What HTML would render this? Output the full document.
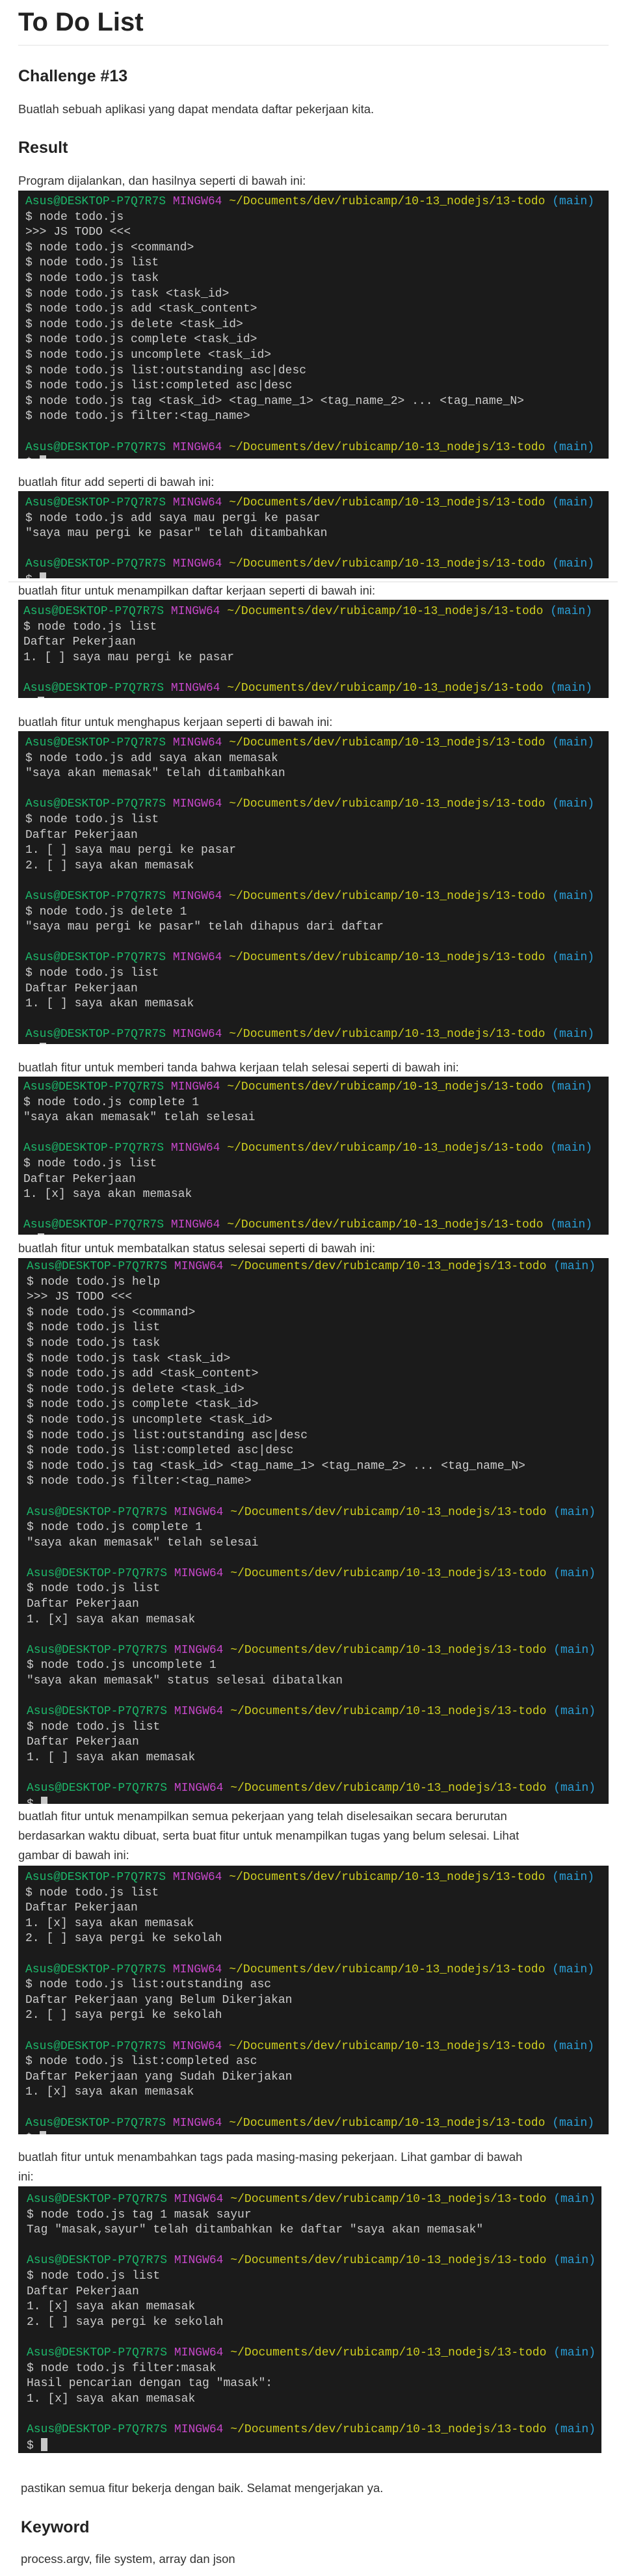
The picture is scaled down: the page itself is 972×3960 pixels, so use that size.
<!DOCTYPE html>
<html><head><meta charset="utf-8">
<style>
html,body{margin:0;padding:0;background:#fff;}
body{width:972px;height:3960px;position:relative;overflow:hidden;font-family:"Liberation Sans",sans-serif;color:#333;}
.t{position:absolute;left:28px;font-size:18.5px;line-height:30px;white-space:nowrap;}
h1,h2{margin:0;position:absolute;left:28px;color:#222;white-space:nowrap;}
h1{font-size:40px;line-height:50px;top:9px;}
h2{font-size:25px;line-height:34px;}
.hr{position:absolute;height:1px;background:#e4e4e4;}
.term{position:absolute;left:28px;width:908px;background:#1b1b1b;overflow:hidden;box-sizing:border-box;padding-left:11px;}
.term pre{margin:0;font-family:"Liberation Mono",monospace;font-size:18px;line-height:23.6px;color:#cccccc;white-space:pre;}
.g{color:#1cb86a}.m{color:#c647c9}.y{color:#cfcf1f}.c{color:#2a9ed6}
.cur{display:inline-block;width:10px;height:20px;background:#c8c8c8;vertical-align:-4px;}
</style></head><body>

<h1>To Do List</h1>
<div class="hr" style="left:28px;width:908px;top:69px"></div>
<h2 style="top:100px">Challenge #13</h2>
<div class="t" style="top:153px">Buatlah sebuah aplikasi yang dapat mendata daftar pekerjaan kita.</div>
<h2 style="top:210px">Result</h2>
<div class="t" style="top:263px">Program dijalankan, dan hasilnya seperti di bawah ini:</div>

<div class="term" style="top:293px;height:412px;padding-top:6px"><pre><span class="g">Asus@DESKTOP-P7Q7R7S</span> <span class="m">MINGW64</span> <span class="y">~/Documents/dev/rubicamp/10-13_nodejs/13-todo</span> <span class="c">(main)</span>
$ node todo.js
&gt;&gt;&gt; JS TODO &lt;&lt;&lt;
$ node todo.js &lt;command&gt;
$ node todo.js list
$ node todo.js task
$ node todo.js task &lt;task_id&gt;
$ node todo.js add &lt;task_content&gt;
$ node todo.js delete &lt;task_id&gt;
$ node todo.js complete &lt;task_id&gt;
$ node todo.js uncomplete &lt;task_id&gt;
$ node todo.js list:outstanding asc|desc
$ node todo.js list:completed asc|desc
$ node todo.js tag &lt;task_id&gt; &lt;tag_name_1&gt; &lt;tag_name_2&gt; ... &lt;tag_name_N&gt;
$ node todo.js filter:&lt;tag_name&gt;

<span class="g">Asus@DESKTOP-P7Q7R7S</span> <span class="m">MINGW64</span> <span class="y">~/Documents/dev/rubicamp/10-13_nodejs/13-todo</span> <span class="c">(main)</span>
$ <span class="cur"></span></pre></div>

<div class="t" style="top:726px">buatlah fitur add seperti di bawah ini:</div>
<div class="term" style="top:755px;height:134px;padding-top:7px"><pre><span class="g">Asus@DESKTOP-P7Q7R7S</span> <span class="m">MINGW64</span> <span class="y">~/Documents/dev/rubicamp/10-13_nodejs/13-todo</span> <span class="c">(main)</span>
$ node todo.js add saya mau pergi ke pasar
"saya mau pergi ke pasar" telah ditambahkan

<span class="g">Asus@DESKTOP-P7Q7R7S</span> <span class="m">MINGW64</span> <span class="y">~/Documents/dev/rubicamp/10-13_nodejs/13-todo</span> <span class="c">(main)</span>
$ <span class="cur"></span></pre></div>
<div class="hr" style="left:13px;width:937px;top:894px;background:#ddd"></div>

<div class="t" style="top:893px">buatlah fitur untuk menampilkan daftar kerjaan seperti di bawah ini:</div>
<div class="term" style="top:922px;height:151px;padding-top:7px;padding-left:8px"><pre><span class="g">Asus@DESKTOP-P7Q7R7S</span> <span class="m">MINGW64</span> <span class="y">~/Documents/dev/rubicamp/10-13_nodejs/13-todo</span> <span class="c">(main)</span>
$ node todo.js list
Daftar Pekerjaan
1. [ ] saya mau pergi ke pasar

<span class="g">Asus@DESKTOP-P7Q7R7S</span> <span class="m">MINGW64</span> <span class="y">~/Documents/dev/rubicamp/10-13_nodejs/13-todo</span> <span class="c">(main)</span>
$ <span class="cur"></span></pre></div>

<div class="t" style="top:1095px">buatlah fitur untuk menghapus kerjaan seperti di bawah ini:</div>
<div class="term" style="top:1124px;height:481px;padding-top:7px"><pre><span class="g">Asus@DESKTOP-P7Q7R7S</span> <span class="m">MINGW64</span> <span class="y">~/Documents/dev/rubicamp/10-13_nodejs/13-todo</span> <span class="c">(main)</span>
$ node todo.js add saya akan memasak
"saya akan memasak" telah ditambahkan

<span class="g">Asus@DESKTOP-P7Q7R7S</span> <span class="m">MINGW64</span> <span class="y">~/Documents/dev/rubicamp/10-13_nodejs/13-todo</span> <span class="c">(main)</span>
$ node todo.js list
Daftar Pekerjaan
1. [ ] saya mau pergi ke pasar
2. [ ] saya akan memasak

<span class="g">Asus@DESKTOP-P7Q7R7S</span> <span class="m">MINGW64</span> <span class="y">~/Documents/dev/rubicamp/10-13_nodejs/13-todo</span> <span class="c">(main)</span>
$ node todo.js delete 1
"saya mau pergi ke pasar" telah dihapus dari daftar

<span class="g">Asus@DESKTOP-P7Q7R7S</span> <span class="m">MINGW64</span> <span class="y">~/Documents/dev/rubicamp/10-13_nodejs/13-todo</span> <span class="c">(main)</span>
$ node todo.js list
Daftar Pekerjaan
1. [ ] saya akan memasak

<span class="g">Asus@DESKTOP-P7Q7R7S</span> <span class="m">MINGW64</span> <span class="y">~/Documents/dev/rubicamp/10-13_nodejs/13-todo</span> <span class="c">(main)</span>
$ <span class="cur"></span></pre></div>

<div class="t" style="top:1626px">buatlah fitur untuk memberi tanda bahwa kerjaan telah selesai seperti di bawah ini:</div>
<div class="term" style="top:1655px;height:243px;padding-top:5px;padding-left:8px"><pre><span class="g">Asus@DESKTOP-P7Q7R7S</span> <span class="m">MINGW64</span> <span class="y">~/Documents/dev/rubicamp/10-13_nodejs/13-todo</span> <span class="c">(main)</span>
$ node todo.js complete 1
"saya akan memasak" telah selesai

<span class="g">Asus@DESKTOP-P7Q7R7S</span> <span class="m">MINGW64</span> <span class="y">~/Documents/dev/rubicamp/10-13_nodejs/13-todo</span> <span class="c">(main)</span>
$ node todo.js list
Daftar Pekerjaan
1. [x] saya akan memasak

<span class="g">Asus@DESKTOP-P7Q7R7S</span> <span class="m">MINGW64</span> <span class="y">~/Documents/dev/rubicamp/10-13_nodejs/13-todo</span> <span class="c">(main)</span>
$ <span class="cur"></span></pre></div>

<div class="t" style="top:1904px">buatlah fitur untuk membatalkan status selesai seperti di bawah ini:</div>
<div class="term" style="top:1934px;height:839px;padding-top:2px;padding-left:13px"><pre><span class="g">Asus@DESKTOP-P7Q7R7S</span> <span class="m">MINGW64</span> <span class="y">~/Documents/dev/rubicamp/10-13_nodejs/13-todo</span> <span class="c">(main)</span>
$ node todo.js help
&gt;&gt;&gt; JS TODO &lt;&lt;&lt;
$ node todo.js &lt;command&gt;
$ node todo.js list
$ node todo.js task
$ node todo.js task &lt;task_id&gt;
$ node todo.js add &lt;task_content&gt;
$ node todo.js delete &lt;task_id&gt;
$ node todo.js complete &lt;task_id&gt;
$ node todo.js uncomplete &lt;task_id&gt;
$ node todo.js list:outstanding asc|desc
$ node todo.js list:completed asc|desc
$ node todo.js tag &lt;task_id&gt; &lt;tag_name_1&gt; &lt;tag_name_2&gt; ... &lt;tag_name_N&gt;
$ node todo.js filter:&lt;tag_name&gt;

<span class="g">Asus@DESKTOP-P7Q7R7S</span> <span class="m">MINGW64</span> <span class="y">~/Documents/dev/rubicamp/10-13_nodejs/13-todo</span> <span class="c">(main)</span>
$ node todo.js complete 1
"saya akan memasak" telah selesai

<span class="g">Asus@DESKTOP-P7Q7R7S</span> <span class="m">MINGW64</span> <span class="y">~/Documents/dev/rubicamp/10-13_nodejs/13-todo</span> <span class="c">(main)</span>
$ node todo.js list
Daftar Pekerjaan
1. [x] saya akan memasak

<span class="g">Asus@DESKTOP-P7Q7R7S</span> <span class="m">MINGW64</span> <span class="y">~/Documents/dev/rubicamp/10-13_nodejs/13-todo</span> <span class="c">(main)</span>
$ node todo.js uncomplete 1
"saya akan memasak" status selesai dibatalkan

<span class="g">Asus@DESKTOP-P7Q7R7S</span> <span class="m">MINGW64</span> <span class="y">~/Documents/dev/rubicamp/10-13_nodejs/13-todo</span> <span class="c">(main)</span>
$ node todo.js list
Daftar Pekerjaan
1. [ ] saya akan memasak

<span class="g">Asus@DESKTOP-P7Q7R7S</span> <span class="m">MINGW64</span> <span class="y">~/Documents/dev/rubicamp/10-13_nodejs/13-todo</span> <span class="c">(main)</span>
$ <span class="cur"></span></pre></div>

<div class="t" style="top:2777px">buatlah fitur untuk menampilkan semua pekerjaan yang telah diselesaikan secara berurutan<br>berdasarkan waktu dibuat, serta buat fitur untuk menampilkan tugas yang belum selesai. Lihat<br>gambar di bawah ini:</div>
<div class="term" style="top:2868px;height:413px;padding-top:7px"><pre><span class="g">Asus@DESKTOP-P7Q7R7S</span> <span class="m">MINGW64</span> <span class="y">~/Documents/dev/rubicamp/10-13_nodejs/13-todo</span> <span class="c">(main)</span>
$ node todo.js list
Daftar Pekerjaan
1. [x] saya akan memasak
2. [ ] saya pergi ke sekolah

<span class="g">Asus@DESKTOP-P7Q7R7S</span> <span class="m">MINGW64</span> <span class="y">~/Documents/dev/rubicamp/10-13_nodejs/13-todo</span> <span class="c">(main)</span>
$ node todo.js list:outstanding asc
Daftar Pekerjaan yang Belum Dikerjakan
2. [ ] saya pergi ke sekolah

<span class="g">Asus@DESKTOP-P7Q7R7S</span> <span class="m">MINGW64</span> <span class="y">~/Documents/dev/rubicamp/10-13_nodejs/13-todo</span> <span class="c">(main)</span>
$ node todo.js list:completed asc
Daftar Pekerjaan yang Sudah Dikerjakan
1. [x] saya akan memasak

<span class="g">Asus@DESKTOP-P7Q7R7S</span> <span class="m">MINGW64</span> <span class="y">~/Documents/dev/rubicamp/10-13_nodejs/13-todo</span> <span class="c">(main)</span>
$ <span class="cur"></span></pre></div>

<div class="t" style="top:3301px">buatlah fitur untuk menambahkan tags pada masing-masing pekerjaan. Lihat gambar di bawah<br>ini:</div>
<div class="term" style="top:3361px;height:410px;padding-top:9px;padding-left:13px;width:897px"><pre><span class="g">Asus@DESKTOP-P7Q7R7S</span> <span class="m">MINGW64</span> <span class="y">~/Documents/dev/rubicamp/10-13_nodejs/13-todo</span> <span class="c">(main)</span>
$ node todo.js tag 1 masak sayur
Tag "masak,sayur" telah ditambahkan ke daftar "saya akan memasak"

<span class="g">Asus@DESKTOP-P7Q7R7S</span> <span class="m">MINGW64</span> <span class="y">~/Documents/dev/rubicamp/10-13_nodejs/13-todo</span> <span class="c">(main)</span>
$ node todo.js list
Daftar Pekerjaan
1. [x] saya akan memasak
2. [ ] saya pergi ke sekolah

<span class="g">Asus@DESKTOP-P7Q7R7S</span> <span class="m">MINGW64</span> <span class="y">~/Documents/dev/rubicamp/10-13_nodejs/13-todo</span> <span class="c">(main)</span>
$ node todo.js filter:masak
Hasil pencarian dengan tag "masak":
1. [x] saya akan memasak

<span class="g">Asus@DESKTOP-P7Q7R7S</span> <span class="m">MINGW64</span> <span class="y">~/Documents/dev/rubicamp/10-13_nodejs/13-todo</span> <span class="c">(main)</span>
$ <span class="cur"></span></pre></div>

<div class="t" style="top:3810px;left:32px">pastikan semua fitur bekerja dengan baik. Selamat mengerjakan ya.</div>
<h2 style="top:3868px;left:32px">Keyword</h2>
<div class="t" style="top:3919px;left:32px">process.argv, file system, array dan json</div>

</body></html>
